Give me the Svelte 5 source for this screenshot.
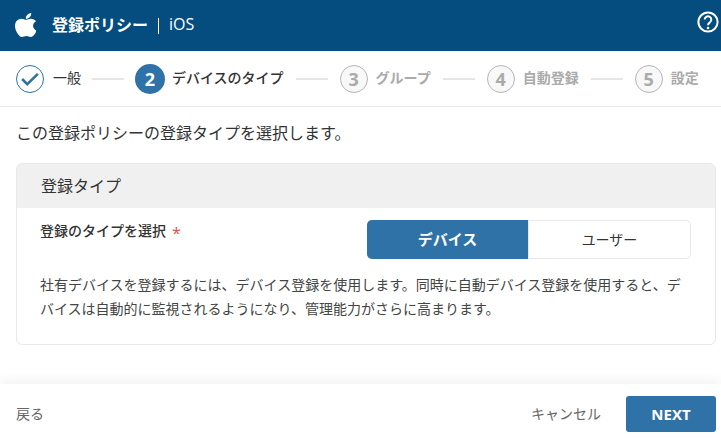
<script>
  const steps = [
    { n: 1, label: "一般", state: "done" },
    { n: 2, label: "デバイスのタイプ", state: "active" },
    { n: 3, label: "グループ", state: "todo" },
    { n: 4, label: "自動登録", state: "todo" },
    { n: 5, label: "設定", state: "todo" },
  ];

  let regType = $state("device");
</script>

<div class="page">
  <header class="top">
    <svg class="apple" viewBox="4 32 365 448" width="21" height="24" preserveAspectRatio="none" aria-hidden="true">
      <path fill="#fff" d="M318.7 268.7c-.2-36.7 16.4-64.4 50-84.8-18.8-26.9-47.2-41.7-84.7-44.6-35.5-2.8-74.3 20.7-88.5 20.7-15 0-49.4-19.7-76.4-19.7C63.3 141.2 4 184.8 4 273.5q0 39.3 14.4 81.2c12.8 36.7 59 126.7 107.2 125.2 25.2-.6 43-17.9 75.8-17.9 31.8 0 48.3 17.9 76.4 17.9 48.6-.7 90.4-82.5 102.6-119.3-65.2-30.7-61.7-90-61.7-91.9zm-56.6-164.2c27.3-32.4 24.8-61.9 24-72.5-24.1 1.4-52 16.4-67.9 34.9-17.5 19.8-27.8 44.3-25.6 71.9 26.1 2 49.9-11.4 69.5-34.3z"/>
    </svg>
    <span class="title">登録ポリシー</span>
    <span class="sep"></span>
    <span class="os">iOS</span>
    <svg class="help" viewBox="0 0 24 24" width="24" height="24" aria-hidden="true">
      <circle cx="12" cy="12" r="9.6" fill="none" stroke="#fff" stroke-width="2"/>
      <path d="M8.7 9.6a3.3 3.3 0 1 1 5.2 2.7c-1.2.8-1.9 1.4-1.9 2.9" fill="none" stroke="#fff" stroke-width="2"/>
      <circle cx="12" cy="18" r="1.3" fill="#fff"/>
    </svg>
  </header>

  <nav class="steps">
    {#each steps as s, i}
      <div class="step {s.state}">
        <span class="dot">
          {#if s.state === "done"}
            <svg viewBox="0 0 28 28" width="28" height="28" aria-hidden="true">
              <path d="M5.5 14l5.5 5.5L22.5 8.5" fill="none" stroke="#2f72a8" stroke-width="2.8"/>
            </svg>
          {:else}
            {s.n}
          {/if}
        </span>
        <span class="label">{s.label}</span>
      </div>
      {#if i < steps.length - 1}
        <span class="line"></span>
      {/if}
    {/each}
  </nav>

  <main class="body">
    <p class="intro">この登録ポリシーの登録タイプを選択します。</p>

    <section class="card">
      <div class="card-head">登録タイプ</div>
      <div class="card-body">
        <div class="field">
          <div class="field-label">登録のタイプを選択<span class="req">*</span></div>
          <div class="toggle">
            <button type="button" class:on={regType === "device"} onclick={() => (regType = "device")}>デバイス</button>
            <button type="button" class:on={regType === "user"} onclick={() => (regType = "user")}>ユーザー</button>
          </div>
        </div>
        <p class="note">社有デバイスを登録するには、デバイス登録を使用します。同時に自動デバイス登録を使用すると、デバイスは自動的に監視されるようになり、管理能力がさらに高まります。</p>
      </div>
    </section>
  </main>

  <footer class="foot">
    <button type="button" class="link">戻る</button>
    <div class="right">
      <button type="button" class="link">キャンセル</button>
      <button type="button" class="next">NEXT</button>
    </div>
  </footer>
</div>

<style>
  :global(body) { margin: 0; background: #fff; }
  .page {
    width: 721px;
    height: 438px;
    display: flex;
    flex-direction: column;
    overflow: hidden;
    font-family: "Open Sans", "Noto Sans CJK JP", sans-serif;
    font-size: 14px;
    color: #333;
  }
  .top {
    height: 51px;
    flex: none;
    background: #064d7f;
    color: #fff;
    display: flex;
    align-items: center;
    padding: 0 0 0 15px;
    position: relative;
  }
  .apple { margin: -1px 16px 0 0; }
  .title { font-size: 16px; font-weight: 700; padding-bottom: 3px; }
  .sep { width: 1px; height: 16px; background: #fff; margin: 0 10px; }
  .os { font-size: 16px; padding-bottom: 3px; }
  .help { position: absolute; right: 1px; top: 10px; }

  .steps {
    height: 56px;
    flex: none;
    box-sizing: border-box;
    border-bottom: 1px solid #e8e8e8;
    display: flex;
    align-items: center;
    padding: 0 0 0 16px;
  }
  .step { display: flex; align-items: center; gap: 8px; }
  .dot {
    width: 28px;
    height: 28px;
    box-sizing: border-box;
    border-radius: 50%;
    display: flex;
    align-items: center;
    justify-content: center;
    font-size: 18px;
    font-weight: 700;
    flex: none;
  }
  .done { gap: 9px; margin-right: -1px; }
  .done .dot { border: 1px solid #2f72a8; }
  .active .dot { background: #2f72a8; color: #fff; width: 30px; height: 30px; }
  .todo .dot { border: 1px solid #b5b5b5; background: #f8f8f8; color: #aaa; }
  .label { font-size: 14px; padding-bottom: 3px; }
  .active { gap: 7px; margin-left: -1px; }
  .active .label { font-weight: 500; }
  .todo .label { color: #aaa; font-weight: 700; }
  .line { width: 32px; height: 2px; background: #e6e6e6; margin: 0 12px; flex: none; }

  .body { flex: 1; padding: 0 5px 0 16px; min-height: 0; }
  .intro { margin: 15px 0 19px; font-size: 16px; line-height: 22px; color: #333; }
  .card { border: 1px solid #e8e8e8; border-radius: 6px; height: 182px; box-sizing: border-box; overflow: hidden; }
  .card-head {
    height: 44px;
    box-sizing: border-box;
    padding: 0 0 3px 24px;
    background: #f0f0f0;
    display: flex;
    align-items: center;
    font-size: 16px;
  }
  .card-body { padding: 12px 24px 0 23px; }
  .field { display: flex; justify-content: space-between; align-items: flex-start; }
  .field-label { font-size: 14px; font-weight: 500; line-height: 22px; }
  .req { color: #d9534f; font-weight: 400; font-size: 16px; line-height: 16px; margin-left: 6px; vertical-align: -3px; }
  .toggle {
    width: 324px;
    height: 39px;
    box-sizing: border-box;
    border: 1px solid #e8e8e8;
    border-radius: 5px;
    display: flex;
  }
  .toggle button {
    flex: 1;
    border: 0;
    background: #fff;
    border-radius: 5px;
    font: inherit;
    font-size: 14px;
    color: #333;
    padding: 0 0 2px;
  }
  .toggle button.on {
    background: #2f72a8;
    color: #fff;
    font-size: 15px;
    font-weight: 700;
    margin: -1px 0 -1px -1px;
    border-radius: 5px 0 0 5px;
    border-right: 1px solid #e8e8e8;
  }
  .note { margin: 14px 0 0; font-size: 14px; line-height: 24px; color: #444; }

  .foot {
    height: 54px;
    flex: none;
    box-sizing: border-box;
    display: flex;
    align-items: center;
    justify-content: space-between;
    padding: 6px 5px 0 16px;
    box-shadow: 0 -4px 10px rgba(0, 0, 0, 0.05);
    background: #fff;
  }
  .right { display: flex; align-items: center; gap: 25px; }
  .link { border: 0; background: none; padding: 0 0 3px; font: inherit; font-size: 14px; color: #666; }
  .next {
    width: 90px;
    height: 36px;
    border: 0;
    border-radius: 3px;
    background: #2f72a8;
    color: #fff;
    font: inherit;
    font-size: 15px;
    font-weight: 700;
    padding: 0;
  }
</style>
